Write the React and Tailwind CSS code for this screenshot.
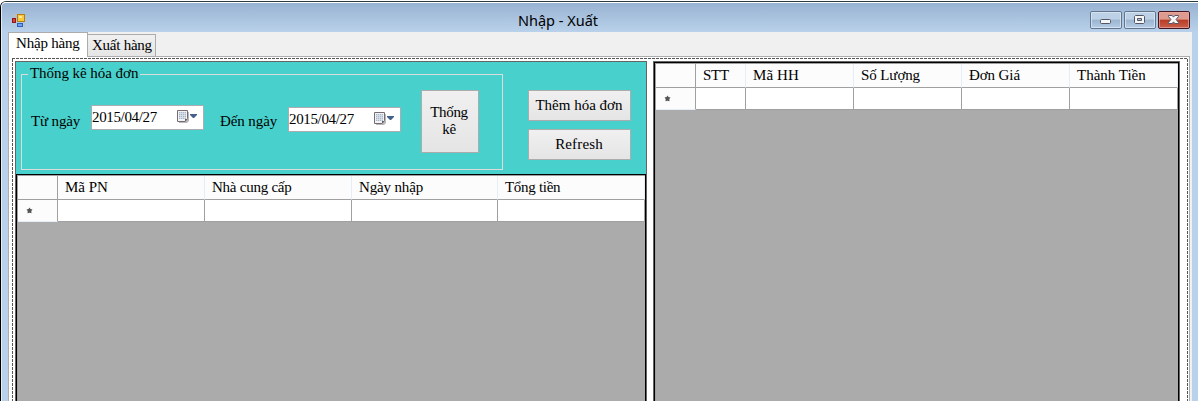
const serif = "font-['Liberation_Serif','Times_New_Roman',serif] text-[15px] leading-[18px] text-black whitespace-nowrap";

function AppIcon() {
  return (
    <svg width="14" height="14" viewBox="0 0 14 14" shapeRendering="crispEdges" className="block">
      <path d="M0 0h1v1H0zM3 0h1v1H3zM0 12h1v1H0zM3 12h1v1H3zM1 1h4v3H1zM12 9h1v4h-1z" fill="#b9bfc6" />
      <rect x="5.5" y=".5" width="7" height="7" fill="#fcc93c" stroke="#b57d10" />
      <rect x="7" y="2" width="3" height="2" fill="#ffe98d" />
      <rect x=".5" y="4.5" width="3" height="4" fill="#d6443a" stroke="#8e1717" />
      <rect x="5.5" y="9.5" width="5" height="3" fill="#6fa3f0" stroke="#2d60b8" />
    </svg>
  );
}

function CaptionButton({ kind }) {
  const close = kind === "close";
  return (
    <div
      className={
        close
          ? "w-8 h-[18px] rounded-[2px] border border-[#431422] bg-linear-to-b from-[#dd9a8f] from-45% via-[#b83b24] via-50% to-[#c9604c]"
          : "w-8 h-[18px] rounded-[2px] border border-[#62758d] bg-linear-to-b from-[#bdd1e6] from-45% via-[#9bb4cf] via-50% to-[#b5cde6]"
      }
    >
      <div className={close ? "h-4 rounded-[1px] border border-[#e8aaa0]/70" : "h-4 rounded-[1px] border border-[#dbe7f4]/80"}>
        <svg width="28" height="14" viewBox="0 0 28 14" className="block">
          {kind === "min" && <rect x="8.5" y="6.5" width="10" height="4" rx="1" fill="#f6f6f6" stroke="#535666" />}
          {kind === "max" && (
            <path fillRule="evenodd" d="M9.5 2.5h8l1 1v6l-1 1h-8l-1-1v-6z M11.5 5.5h4v2h-4z" fill="#f6f6f6" stroke="#535666" />
          )}
          {close && (
            <path
              d="M8.5 2.5h3.7l1.3 1.6 1.3-1.6h3.7v1l-2.4 3 2.4 3v1h-3.7l-1.3-1.6-1.3 1.6H8.5v-1l2.4-3-2.4-3z"
              fill="#f6f6f6"
              stroke="#535666"
            />
          )}
        </svg>
      </div>
    </div>
  );
}

function DatePicker({ className }) {
  return (
    <div className={"flex w-[113px] h-[25px] border border-[#abadb3] bg-white " + className}>
      <span className={serif + " w-[85px] pt-[2px] tracking-[-0.35px]"}>2015/04/27</span>
      <svg width="24" height="20" viewBox="0 0 24 20" className="mt-[2px]">
        <path d="M2 4h10v9l-2 2H2z" fill="#b9b9bd" />
        <path d="M.5 2.5h10v8l-2.5 3H.5z" fill="#f1f3f7" stroke="#776d70" />
        <path d="M2 4h7v7H2z" fill="#a9b5c6" />
        <path d="M3.5 4v7M5.5 4v7M7.5 4v7M2 5.5h7M2 7.5h7M2 9.5h7" stroke="#dfe6ef" strokeWidth=".7" />
        <path d="M8 13.5V11h2.5z" fill="#655f64" />
        <path d="M13 6h7v1l-3 3h-1l-3-3z" fill="#44608c" />
      </svg>
    </div>
  );
}

function Button({ children, className }) {
  return (
    <button
      className={
        serif + " flex items-center justify-center border border-[#acacac] bg-linear-to-b from-[#f0f0f0] to-[#e5e5e5] pb-[2px] " + className
      }
    >
      {children}
    </button>
  );
}

function Grid({ cols }) {
  return (
    <div className="flex flex-1 flex-col bg-[#ababab] border-t border-t-[#a0a0a0] border-l border-l-[#a0a0a0]">
      <div className="flex h-6">
        <div className="w-10 border-r border-b border-[#a0a0a0] bg-[#fcfcfc]" />
        {cols.map(([label, width, spacing]) => (
          <div key={label} className={serif + " border-r border-r-[#e5edf8] border-b border-b-[#a0a0a0] bg-[#fcfcfc] pl-[7px] pt-[2px] " + width + " " + spacing}>
            {label}
          </div>
        ))}
      </div>
      <div className="flex h-[22px]">
        <div className="flex w-10 items-center border-r border-r-[#a0a0a0] border-b border-b-[#e5edf8] bg-[#fcfcfc] pl-2">
          <svg width="7" height="7" viewBox="0 0 7 7" className="block">
            <path d="M3.5 .5l1 1.6 2 .4-1.2 1.6.2 2.2-2-.6-2 .6.2-2.2L.5 2.5l2-.4z" fill="#555" />
          </svg>
        </div>
        {cols.map(([label, width]) => (
          <div key={label} className={"border-r border-b border-[#a0a0a0] bg-white " + width} />
        ))}
      </div>
    </div>
  );
}

const receipts = [
  ["Mã PN", "w-[147px]", ""],
  ["Nhà cung cấp", "w-[147px]", "tracking-[-0.25px]"],
  ["Ngày nhập", "w-[146px]", "tracking-[-0.15px]"],
  ["Tổng tiền", "w-[147px]", "tracking-[-0.3px]"],
];
const items = [
  ["STT", "w-[50px]", "tracking-[-0.3px]"],
  ["Mã HH", "w-[108px]", "tracking-[0.1px]"],
  ["Số Lượng", "w-[108px]", "tracking-[-0.1px]"],
  ["Đơn Giá", "w-[108px]", "tracking-[-0.1px]"],
  ["Thành Tiền", "w-[108px]", ""],
];

const dashesDown = "w-px bg-[repeating-linear-gradient(to_bottom,#555_0px,#555_3px,#fff_3px,#fff_4px)]";

export default function App() {
  return (
    <div className="h-[401px] w-[1198px] overflow-hidden bg-white pt-px">
      <div className="flex h-full flex-col rounded-tl-[6px] border-t border-l border-t-[#2f3a3d] border-l-black">
        <div className="flex flex-1 flex-col rounded-tl-[5px] border-t border-l border-t-white border-l-[#e3edf7] bg-[#b9d1ea]">
          <div className="flex h-[29px] rounded-tl-[4px] bg-linear-to-b from-[#98b3d2] to-[#b9d1ea] pl-[10px]">
            <div className="pt-[11px]">
              <AppIcon />
            </div>
            <div className="w-[492px]" />
            <div className="w-[572px] pt-[7px] font-['Noto_Sans',sans-serif] text-[14.5px] leading-[20px] text-black">Nhập - Xuất</div>
            <div className="flex gap-[2px] pt-2">
              <CaptionButton kind="min" />
              <CaptionButton kind="max" />
              <CaptionButton kind="close" />
            </div>
          </div>
          <div className="ml-[6px] flex w-[1184px] flex-1 flex-col bg-[#f0f0f0]">
            <div className="flex h-6 items-end">
              <div className={serif + " relative z-10 -mb-px h-[25px] w-20 border border-b-0 border-[#acacac] bg-white pl-[7px] pt-px tracking-[-0.2px]"}>Nhập hàng</div>
              <div className={serif + " h-[22px] w-[68px] border border-l-0 border-b-0 border-[#acacac] bg-linear-to-b from-[#f0f0f0] to-[#e6e6e6] pl-1 pt-px tracking-[-0.25px]"}>Xuất hàng</div>
            </div>
            <div className="flex w-[1182px] flex-1 border border-b-0 border-[#acacac] bg-white pl-[3px] pt-px">
              <div className="flex w-[1176px] flex-col">
                <div className="h-px bg-[repeating-linear-gradient(to_right,#555_0px,#555_3px,#fff_3px,#fff_4px)]" />
                <div className="flex flex-1">
                  <div className={dashesDown} />
                  <div className="flex w-[1174px] pl-[2px] pt-[2px]">
                    <div className="flex w-[632px] flex-col border border-b-0 border-[#646464]">
                      <div className="flex h-[112px] bg-[#48d1cc]">
                        <fieldset className="ml-[5px] mt-[2px] h-[106px] w-[482px] border border-[#dcdcdc]">
                          <legend className={serif + " ml-[6px] px-[2px] pb-[2px] tracking-[-0.05px]"}>Thống kê hóa đơn</legend>
                          <div className="flex">
                            <div className={serif + " w-[61px] pl-[9px] pt-[28px] tracking-[-0.15px]"}>Từ ngày</div>
                            <DatePicker className="mt-[21px] ml-[8px]" />
                            <div className={serif + " ml-[16px] w-[68px] pt-[28px] tracking-[-0.1px]"}>Đến ngày</div>
                            <DatePicker className="mt-[23px]" />
                            <Button className="ml-5 mt-[6px] h-[63px] w-[58px] pr-[2px] tracking-[-0.3px]">
                              <span className="leading-[17px]">Thống<br />kê</span>
                            </Button>
                          </div>
                        </fieldset>
                        <div className="ml-[25px] mt-7 flex flex-col gap-2">
                          <Button className="h-[31px] w-[103px] pr-px">Thêm hóa đơn</Button>
                          <Button className="h-[31px] w-[103px] pr-px tracking-[0.15px]">Refresh</Button>
                        </div>
                      </div>
                      <div className="flex flex-1 border border-b-0 border-black">
                        <Grid cols={receipts} />
                      </div>
                    </div>
                    <div className="ml-[6px] flex w-[527px] border border-b-0 border-[#646464]">
                      <div className="flex flex-1 border border-b-0 border-black">
                        <Grid cols={items} />
                      </div>
                    </div>
                  </div>
                  <div className={dashesDown} />
                </div>
              </div>
            </div>
          </div>
        </div>
      </div>
    </div>
  );
}
